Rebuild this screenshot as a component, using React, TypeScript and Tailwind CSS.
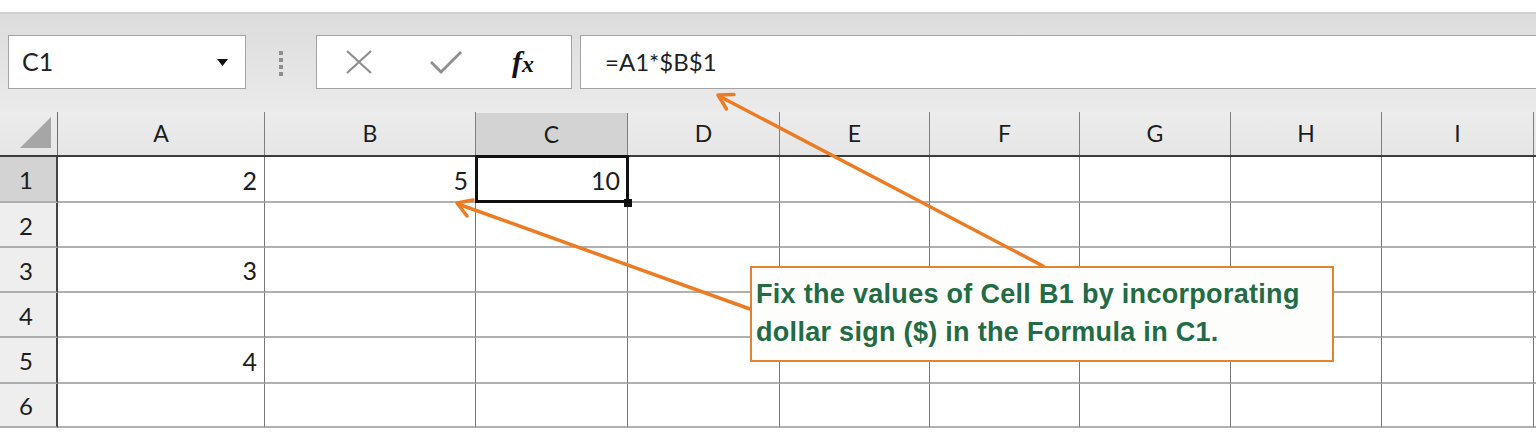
import React from 'react';

const cols = [
  { key: 'A', w: 'w-[207px]' },
  { key: 'B', w: 'w-[211px]' },
  { key: 'C', w: 'w-[152px]' },
  { key: 'D', w: 'w-[152px]' },
  { key: 'E', w: 'w-[150px]' },
  { key: 'F', w: 'w-[150px]' },
  { key: 'G', w: 'w-[151px]' },
  { key: 'H', w: 'w-[151px]' },
  { key: 'I', w: 'w-[152px]' },
];

const rows = [
  { n: 1, h: 'h-[46px]', values: { A: '2', B: '5', C: '10' } as Record<string, string> },
  { n: 2, h: 'h-[45px]', values: {} as Record<string, string> },
  { n: 3, h: 'h-[45px]', values: { A: '3' } as Record<string, string> },
  { n: 4, h: 'h-[45px]', values: {} as Record<string, string> },
  { n: 5, h: 'h-[46px]', values: { A: '4' } as Record<string, string> },
  { n: 6, h: 'h-[44px]', values: {} as Record<string, string> },
];

const font = "font-['Lato','Liberation_Sans',sans-serif]";

// Name box + formula bar strip
const FormulaBar = () => (
  <div className="h-[100px] border-t-2 border-[#cfcfcf] bg-gradient-to-b from-[#dcdcdc] to-[#ebebeb] flex items-start pt-[21px]">
    <div className="ml-[8px] w-[238px] h-[54px] bg-white border border-[#a3a3a3] flex items-center justify-between pl-[13px] pr-[17px]">
      <span className={`${font} text-[25px] text-[#222]`}>C1</span>
      <svg width="11" height="7" viewBox="0 0 11 7">
        <polygon points="0,0 11,0 5.5,7" fill="#111" />
      </svg>
    </div>
    <div className="ml-[33px] mt-[16px] flex flex-col gap-[3px]">
      {[0, 1, 2, 3].map((i) => (
        <div key={i} className="w-[4px] h-[4px] bg-[#8d8d8d]" />
      ))}
    </div>
    <div className="ml-[33px] w-[256px] h-[54px] bg-white border border-[#a3a3a3] flex items-center">
      <svg className="ml-[27px]" width="30" height="26" viewBox="0 0 30 26">
        <path d="M3 2 L27 24 M27 2 L3 24" stroke="#8f8f8f" strokeWidth="2.2" fill="none" />
      </svg>
      <svg className="ml-[55px]" width="34" height="26" viewBox="0 0 34 26">
        <path d="M2 13 L12 23 L32 3" stroke="#8f8f8f" strokeWidth="2.8" fill="none" />
      </svg>
      <span className="ml-[49px] font-['Liberation_Serif',serif] italic font-bold text-[30px] text-[#111] leading-none">
        f<span className="text-[24px]">x</span>
      </span>
    </div>
    <div className="ml-[8px] flex-1 h-[54px] bg-white border border-[#a3a3a3] border-r-0 flex items-center pl-[24px]">
      <span className={`${font} text-[24px] text-[#222]`}>=A1*$B$1</span>
    </div>
  </div>
);

const HeaderRow = () => (
  <div className="flex h-[45px] border-b-2 border-[#3c3c3c] bg-gradient-to-b from-[#ececec] to-[#e6e6e6]">
    <div className="w-[58px] shrink-0 border-r border-[#6f6f6f] flex items-end justify-end pr-[6px] pb-[7px]">
      <svg width="31" height="31" viewBox="0 0 31 31">
        <polygon points="0,31 31,31 31,0" fill="#a6a6a6" />
      </svg>
    </div>
    {cols.map((c) => (
      <div
        key={c.key}
        className={`${c.w} shrink-0 border-r border-[#7f7f7f] flex items-center justify-center ${font} text-[23px] text-[#1d1d1d] ${
          c.key === 'C' ? 'bg-[#d3d3d3] mt-[1px]' : ''
        }`}
      >
        {c.key}
      </div>
    ))}
    <div className="flex-1" />
  </div>
);

const Grid = () => (
  <div>
    {rows.map((r) => (
      <div key={r.n} className={`flex ${r.h}`}>
        <div
          className={`w-[58px] shrink-0 border-r-2 border-[#444] border-b-2 border-b-[#adadad] flex items-center justify-center pr-[4px] pt-[2px] ${font} text-[24px] text-[#1d1d1d] ${
            r.n === 1 ? 'bg-[#d3d3d3]' : 'bg-[#eeeeee]'
          }`}
        >
          {r.n}
        </div>
        {cols.map((c) => (
          <div
            key={c.key}
            className={`${c.w} shrink-0 relative border-r border-[#777] border-b-2 border-b-[#b0b0b0] flex items-center justify-end pr-[7px] pt-[3px] ${font} text-[25px] text-[#1d1d1d]`}
          >
            {r.values[c.key] ?? ''}
            {r.n === 1 && c.key === 'C' && (
              <>
                <div className="absolute -left-[1px] -top-[2px] -right-[2px] -bottom-[2px] border-[3px] border-[#111]" />
                <div className="absolute z-10 -right-[5px] -bottom-[6px] w-[8px] h-[8px] bg-[#111]" />
              </>
            )}
          </div>
        ))}
        <div className="flex-1 border-b-2 border-b-[#b0b0b0]" />
      </div>
    ))}
  </div>
);

const Callout = () => (
  <div className="absolute left-[750px] top-[266px] w-[584px] h-[96px] bg-[#fdfdfc] border-[2.5px] border-[#e2832f] pl-[4px] pt-[7px]">
    <p className="font-['Liberation_Sans',Arial,sans-serif] font-bold text-[27px] leading-[38px] text-[#226b45] tracking-[0.3px]">
      Fix the values of Cell B1 by incorporating
      <br />
      dollar sign ($) in the Formula in C1.
    </p>
  </div>
);

const Arrows = () => (
  <svg className="absolute inset-0 pointer-events-none" width="1536" height="440" viewBox="0 0 1536 440">
    <g stroke="#ec7c24" strokeWidth="3.5" fill="none" strokeLinecap="round" strokeLinejoin="round">
      <line x1="1043" y1="266" x2="719" y2="96" />
      <polyline points="726.5,109 718,95 734,94.5" />
      <line x1="750" y1="309" x2="458" y2="204" />
      <polyline points="467,216 457,203 473,200" />
    </g>
  </svg>
);

export default function App() {
  return (
    <div className="relative w-[1536px] h-[440px] bg-white overflow-hidden">
      <div className="h-[12px] bg-white" />
      <FormulaBar />
      <HeaderRow />
      <Grid />
      <Callout />
      <Arrows />
    </div>
  );
}
